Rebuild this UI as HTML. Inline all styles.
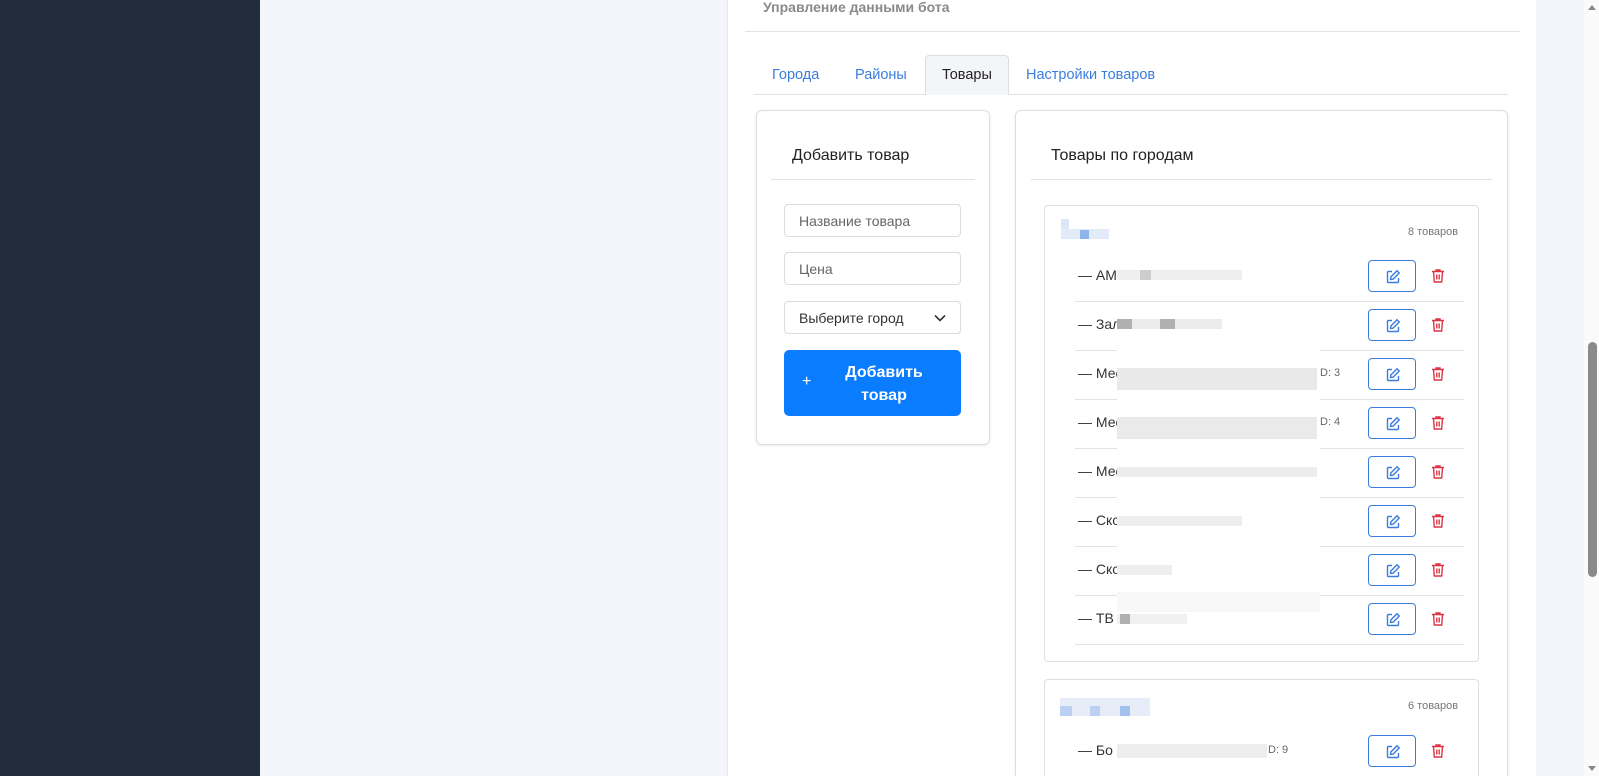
<!DOCTYPE html>
<html style="overflow:hidden;width:1599px;height:776px"><head><meta charset="utf-8"><style>
*{box-sizing:border-box;margin:0;padding:0}
body{width:1599px;height:776px;overflow:hidden;position:relative;background:#f4f5fa;font-family:"Liberation Sans",sans-serif;color:#333}
.a{position:absolute}
.side{left:0;top:0;width:260px;height:776px;background:#222d3c}
.main{left:727px;top:0;width:809px;height:776px;background:#fff;border-left:1px solid #e6e6ea}
.tab{top:67px;font-size:14.5px;color:#3b7ddd}
.card{background:#fff;border:1px solid #dedede;border-radius:6px;box-shadow:0 1px 3px rgba(0,0,0,.08)}
.inp{left:784px;width:177px;height:33px;border:1px solid #dcdcdc;border-radius:4px;font-size:14px;color:#666;padding:8px 14px}
.row{left:1078px;font-size:14px;color:#333}
.line{height:1px;background:#e3e3e3}
.ed{left:1368px;width:48px;height:32px;border:1px solid #3b7ddd;border-radius:4px;background:#fff}
.ed svg{position:absolute;left:16px;top:8px}
.tr{left:1431px}
</style></head><body>
<div class="a side"></div>
<div class="a main"></div>
<div class="a" style="left:1584px;top:0;width:15px;height:776px;background:#fafafa"></div>
<div class="a" style="left:1588px;top:342px;width:9px;height:235px;background:#8a8a8a;border-radius:5px"></div>
<div class="a" style="left:1588px;top:5px;width:0;height:0;border-left:4px solid transparent;border-right:4px solid transparent;border-bottom:5px solid #888"></div>
<div class="a" style="left:1588px;top:766px;width:0;height:0;border-left:4px solid transparent;border-right:4px solid transparent;border-top:5px solid #888"></div>

<div class="a" style="left:763px;top:-1px;font-size:14px;font-weight:bold;color:#8a8a8a">Управление данными бота</div>
<div class="a line" style="left:745px;top:31px;width:775px"></div>

<div class="a line" style="left:754px;top:94px;width:754px"></div>
<div class="a" style="left:925px;top:55px;width:84px;height:40px;background:#f4f5f8;border:1px solid #dedede;border-bottom:none;border-radius:4px 4px 0 0"></div>
<div class="a tab" style="left:772px">Города</div>
<div class="a tab" style="left:855px">Районы</div>
<div class="a tab" style="left:942px;color:#222">Товары</div>
<div class="a tab" style="left:1026px">Настройки товаров</div>

<div class="a card" style="left:756px;top:110px;width:234px;height:335px"></div>
<div class="a" style="left:792px;top:147px;font-size:16px;color:#222">Добавить товар</div>
<div class="a line" style="left:771px;top:179px;width:204px"></div>
<div class="a inp" style="top:204px">Название товара</div>
<div class="a inp" style="top:252px">Цена</div>
<div class="a inp" style="top:301px;color:#333">Выберите город<svg style="position:absolute;right:14px;top:12px" width="12" height="8" viewBox="0 0 12 8"><path d="M1 1.5l5 5 5-5" stroke="#333" stroke-width="1.6" fill="none"/></svg></div>
<div class="a" style="left:784px;top:350px;width:177px;height:66px;background:#0a7cff;border-radius:5px;color:#fff">
<span class="a" style="left:18px;top:23px;font-size:16px">+</span>
<div class="a" style="left:40px;width:120px;top:11px;text-align:center;font-size:16px;font-weight:bold;line-height:23px">Добавить<br>товар</div></div>

<div class="a card" style="left:1015px;top:110px;width:493px;height:666px;border-bottom:none;border-radius:6px 6px 0 0"></div>
<div class="a" style="left:1051px;top:147px;font-size:16px;color:#222">Товары по городам</div>
<div class="a line" style="left:1031px;top:179px;width:461px"></div>

<div class="a" style="left:1044px;top:205px;width:435px;height:457px;border:1px solid #dedede;border-radius:4px"></div>
<div class="a" style="left:1061px;top:219px;width:8px;height:10px;background:#dde6f6"></div>
<div class="a" style="left:1061px;top:229px;width:48px;height:10px;background:#e3ebf8"></div>
<div class="a" style="left:1080px;top:230px;width:9px;height:9px;background:#8fb4ea"></div>
<div class="a" style="left:1408px;top:226px;font-size:11px;color:#777">8 товаров</div>

<div class="a" style="left:1044px;top:679px;width:435px;height:97px;border:1px solid #dedede;border-bottom:none;border-radius:4px 4px 0 0"></div>
<div class="a" style="left:1060px;top:698px;width:90px;height:18px;background:#e6edf9"></div>
<div class="a" style="left:1060px;top:706px;width:12px;height:10px;background:#bcd1f2"></div>
<div class="a" style="left:1090px;top:706px;width:10px;height:10px;background:#bcd1f2"></div>
<div class="a" style="left:1120px;top:706px;width:10px;height:10px;background:#a3c0ee"></div>
<div class="a" style="left:1408px;top:700px;font-size:11px;color:#777">6 товаров</div>

<div id="rows"></div>
<script>
var ys=[276,325,374,423,472,521,570,619,751],names=["— АМ","— Зал","— Мес","— Мес","— Мес","— Скс","— Скс","— ТВ","— Бо"];
var ext={2:"D: 3",3:"D: 4",8:"D: 9"};var h="";
var ed='<svg width="16" height="16" viewBox="0 0 16 16" fill="none" stroke="#3b7ddd" stroke-width="1.4"><path d="M7 2.5H3.5a1 1 0 0 0-1 1v9a1 1 0 0 0 1 1h9a1 1 0 0 0 1-1V9"/><path d="M12 1.8l2.2 2.2L8 10.2 5.5 10.5 5.8 8z"/></svg>';
var tr='<svg width="14" height="16" viewBox="0 0 14 16" fill="none" stroke="#dc3545" stroke-width="1.4"><path d="M1 3.5h12M5 3.5V2h4v1.5M2.5 3.5l.8 10.5h7.4l.8-10.5M5.8 6.5v5M8.2 6.5v5"/></svg>';
ys.forEach(function(y,i){
h+='<div class="a row" style="top:'+(y-9)+'px">'+names[i]+'</div>';
h+='<div class="a line" style="left:1075px;top:'+(y+25)+'px;width:389px"></div>';
h+='<div class="a ed" style="top:'+(y-16)+'px">'+ed+'</div>';
h+='<div class="a tr" style="top:'+(y-8)+'px">'+tr+'</div>';
if(ext[i])h+='<div class="a" style="left:'+(i==8?1268:1320)+'px;top:'+(y-7)+'px;font-size:11px;color:#666">'+ext[i]+'</div>';
});
document.getElementById('rows').innerHTML=h;
</script>
<div class="a" style="left:1117px;top:302px;width:203px;height:340px;background:#fff"></div>
<div class="a" style="left:1117px;top:592px;width:203px;height:20px;background:#f8f8f8"></div>
<div class="a" style="left:1117px;top:270px;width:125px;height:10px;background:#efefef"></div>
<div class="a" style="left:1140px;top:270px;width:11px;height:10px;background:#cdcdcd"></div>
<div class="a" style="left:1117px;top:319px;width:105px;height:10px;background:#ececec"></div>
<div class="a" style="left:1117px;top:319px;width:15px;height:10px;background:#b0b0b0"></div>
<div class="a" style="left:1160px;top:319px;width:15px;height:10px;background:#b0b0b0"></div>
<div class="a" style="left:1117px;top:368px;width:200px;height:22px;background:#e9e9e9"></div>
<div class="a" style="left:1117px;top:417px;width:200px;height:22px;background:#eaeaea"></div>
<div class="a" style="left:1117px;top:467px;width:200px;height:10px;background:#ececec"></div>
<div class="a" style="left:1117px;top:516px;width:125px;height:10px;background:#eeeeee"></div>
<div class="a" style="left:1117px;top:565px;width:55px;height:10px;background:#eeeeee"></div>
<div class="a" style="left:1117px;top:614px;width:70px;height:10px;background:#f1f1f1"></div>
<div class="a" style="left:1120px;top:614px;width:10px;height:10px;background:#b0b0b0"></div>
<div class="a" style="left:1117px;top:744px;width:150px;height:14px;background:#ededed"></div>
</body></html>
